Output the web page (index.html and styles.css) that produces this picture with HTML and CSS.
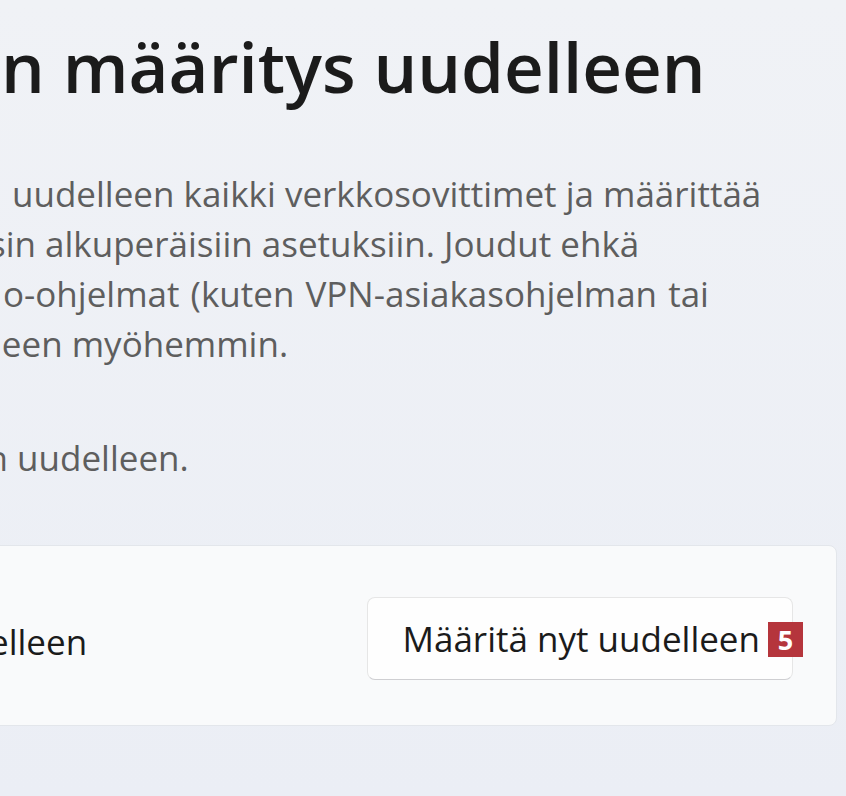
FILE: index.html
```html
<!DOCTYPE html>
<html lang="fi">
<head>
<meta charset="utf-8">
<title>Verkon määritys uudelleen</title>
<link rel="stylesheet" href="styles.css">
</head>
<body>
<main class="page">
  <h1 class="title">n määritys uudelleen</h1>
  <p class="desc">
    <span class="line line-1">uudelleen kaikki verkkosovittimet ja määrittää</span>
    <span class="line line-2">sin alkuperäisiin asetuksiin. Joudut ehkä</span>
    <span class="line line-3">o-ohjelmat (kuten VPN-asiakasohjelman tai</span>
    <span class="line line-4">leen myöhemmin.</span>
  </p>
  <p class="note">n uudelleen.</p>
  <section class="card">
    <span class="card-label">elleen</span>
    <button class="btn" type="button">Määritä nyt uudelleen<span class="badge">5</span></button>
  </section>
</main>
</body>
</html>
```

FILE: styles.css
```css
html, body {
  margin: 0;
  height: 100%;
}

body {
  background: linear-gradient(180deg, #f0f2f6 0%, #ebeef5 100%);
  font-family: "Open Sans", "Noto Sans", sans-serif;
  overflow: hidden;
}

.page {
  padding: 26px 9px 0 0;
}

.title {
  margin: 0;
  padding-left: 1px;
  font-size: 69px;
  font-weight: 600;
  line-height: 80px;
  color: #1b1b1b;
  white-space: nowrap;
}

.desc {
  margin: 63px 0 0;
  font-size: 35px;
  line-height: 50px;
  color: #5e5e5e;
}

.line {
  display: block;
  white-space: nowrap;
}

.line-1 { margin-left: 12px; }
.line-2 { margin-left: -11px; }
.line-3 { margin-left: 3px; word-spacing: 2px; }
.line-4 { margin-left: -7px; }

.note {
  margin: 64px 0 0 -13.5px;
  font-size: 35px;
  line-height: 50px;
  color: #5e5e5e;
  white-space: nowrap;
}

.card {
  margin: 62px 0 0 -20px;
  height: 181px;
  box-sizing: border-box;
  padding: 6px 43px 0 8px;
  display: flex;
  align-items: center;
  justify-content: space-between;
  background: #f9fafb;
  border: 1px solid #e3e6eb;
  border-radius: 8px;
}

.card-label {
  margin-top: 7px;
  font-size: 35px;
  line-height: 50px;
  color: #1b1b1b;
}

.btn {
  position: relative;
  height: 83px;
  box-sizing: border-box;
  padding: 0 32px 0 34px;
  font-family: inherit;
  font-size: 35px;
  line-height: 50px;
  color: #1b1b1b;
  background: #fefefe;
  border: 1px solid #e6e6e6;
  border-bottom-color: #cfcfd2;
  border-radius: 8px;
  white-space: nowrap;
}

.badge {
  position: absolute;
  top: 24px;
  right: -11px;
  width: 35px;
  height: 35px;
  background: #b5353c;
  color: #ffffff;
  font-size: 27px;
  font-weight: 700;
  line-height: 35px;
  text-align: center;
}
```
